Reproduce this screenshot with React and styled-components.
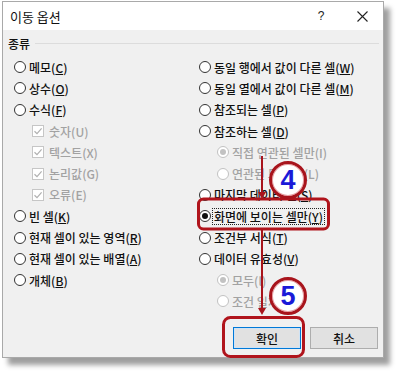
import React from 'react';
import styled, { createGlobalStyle } from 'styled-components';

const GlobalStyle = createGlobalStyle`
  body {
    margin: 0;
    background: #fff;
    font-family: "Noto Sans CJK KR", "Noto Sans", sans-serif;
  }
`;

const leftItems = [
  { label: '메모', key: 'C' },
  { label: '상수', key: 'O' },
  { label: '수식', key: 'F' },
  { label: '숫자', key: 'U', check: true, sub: true, disabled: true },
  { label: '텍스트', key: 'X', check: true, sub: true, disabled: true },
  { label: '논리값', key: 'G', check: true, sub: true, disabled: true },
  { label: '오류', key: 'E', check: true, sub: true, disabled: true },
  { label: '빈 셀', key: 'K' },
  { label: '현재 셀이 있는 영역', key: 'R' },
  { label: '현재 셀이 있는 배열', key: 'A' },
  { label: '개체', key: 'B' },
];

const rightItems = [
  { label: '동일 행에서 값이 다른 셀', key: 'W' },
  { label: '동일 열에서 값이 다른 셀', key: 'M' },
  { label: '참조되는 셀', key: 'P' },
  { label: '참조하는 셀', key: 'D' },
  { label: '직접 연관된 셀만', key: 'I', sub: true, disabled: true, selected: true },
  { label: '연관된 모든 셀', key: 'L', sub: true, disabled: true },
  { label: '마지막 데이터 셀', key: 'S' },
  { label: '화면에 보이는 셀만', key: 'Y', selected: true, focus: true },
  { label: '조건부 서식', key: 'T' },
  { label: '데이터 유효성', key: 'V' },
  { label: '모두', key: 'l', sub: true, disabled: true, selected: true },
  { label: '조건 일치', key: 'S', sub: true, disabled: true },
];

const Option = ({ item }) => (
  <Row $sub={item.sub} $disabled={item.disabled}>
    {item.check ? (
      <CheckBox $disabled={item.disabled}>
        <svg width="10" height="10" viewBox="0 0 10 10">
          <path d="M1.5 5.2 L4 7.6 L8.6 2.4" fill="none" stroke="currentColor" strokeWidth="1.2" />
        </svg>
      </CheckBox>
    ) : (
      <Radio $disabled={item.disabled} $selected={item.selected} />
    )}
    <Label $focus={item.focus}>
      {item.label}({item.disabled ? item.key : <u>{item.key}</u>})
    </Label>
  </Row>
);

export default function App() {
  return (
    <Page>
      <GlobalStyle />
      <Dialog>
        <TitleBar>
          <Title>이동 옵션</Title>
          <HelpBtn>?</HelpBtn>
          <CloseBtn>
            <svg width="11" height="11" viewBox="0 0 11 11">
              <path d="M0.5 0.5 L10.5 10.5 M10.5 0.5 L0.5 10.5" stroke="#222" strokeWidth="1.1" />
            </svg>
          </CloseBtn>
        </TitleBar>
        <Body>
          <GroupLabel>
            <span>종류</span>
            <Rule />
          </GroupLabel>
          <Columns>
            <Column>
              {leftItems.map((it, i) => <Option key={i} item={it} />)}
            </Column>
            <Column>
              {rightItems.map((it, i) => <Option key={i} item={it} />)}
            </Column>
          </Columns>
          <Buttons>
            <Button $primary>확인</Button>
            <Button>취소</Button>
          </Buttons>
        </Body>
      </Dialog>

      <Marks width="400" height="372" viewBox="0 0 400 372">
        <rect x="198.5" y="199" width="130" height="30" rx="5" fill="none" stroke="#b0141c" strokeWidth="3" />
        <rect x="223.5" y="317.5" width="80" height="39" rx="7" fill="none" stroke="#b0141c" strokeWidth="3" />
        <line x1="262" y1="156" x2="262" y2="193" stroke="#a8141c" strokeWidth="2" />
        <path d="M258 192 L266 192 L262 199 Z" fill="#a8141c" />
        <line x1="262" y1="230" x2="262" y2="309" stroke="#a8141c" strokeWidth="2" />
        <path d="M258 308 L266 308 L262 315 Z" fill="#a8141c" />
      </Marks>
      <Badge style={{ left: 269, top: 161 }}>4</Badge>
      <Badge style={{ left: 269, top: 277 }}>5</Badge>
    </Page>
  );
}

const Page = styled.div`
  position: relative;
  width: 400px;
  height: 372px;
  padding: 1px 0 0 2px;
  box-sizing: border-box;
  background: #fff;
  overflow: hidden;
`;

const Dialog = styled.div`
  width: 382px;
  height: 357px;
  box-sizing: border-box;
  display: flex;
  flex-direction: column;
  border: 1px solid #a9a9a9;
  background: #f0f0f0;
  box-shadow: 6px 7px 5px rgba(0, 0, 0, 0.38);
`;

const TitleBar = styled.div`
  height: 28px;
  display: flex;
  align-items: center;
  background: #fff;
  padding-left: 7px;
  font-size: 13px;
  font-weight: 400;
  color: #111;
`;

const Title = styled.div`
  flex: 1;
`;

const HelpBtn = styled.div`
  width: 40px;
  text-align: center;
  font-family: "Liberation Sans", Arial, sans-serif;
  font-size: 12px;
  color: #222;
`;

const CloseBtn = styled.div`
  width: 42px;
  height: 28px;
  display: flex;
  align-items: center;
  justify-content: center;
`;

const Body = styled.div`
  flex: 1;
  display: flex;
  flex-direction: column;
  padding: 6px 0 0 0;
  font-size: 12px;
  font-weight: 500;
  color: #111;
`;

const GroupLabel = styled.div`
  height: 14px;
  display: flex;
  align-items: center;
  gap: 5px;
  padding: 0 4px 0 5px;
`;

const Rule = styled.div`
  flex: 1;
  height: 1px;
  background: #dcdcdc;
`;

const Columns = styled.div`
  display: grid;
  grid-template-columns: 185px 1fr;
  padding: 6.5px 0 0 11px;
`;

const Column = styled.div`
  display: flex;
  flex-direction: column;
`;

const Row = styled.div`
  height: 21.3px;
  display: flex;
  align-items: center;
  gap: 2px;
  padding-left: ${p => (p.$sub ? '18px' : '0')};
  color: ${p => (p.$disabled ? '#a2a2a2' : '#111')};
  white-space: nowrap;
`;

const Radio = styled.span`
  position: relative;
  width: 12px;
  height: 12px;
  box-sizing: border-box;
  border-radius: 50%;
  border: 1px solid ${p => (p.$disabled ? '#c2c2c2' : '#333')};
  background: #fff;
  flex: none;
  &::after {
    content: '';
    display: ${p => (p.$selected ? 'block' : 'none')};
    position: absolute;
    left: 2px;
    top: 2px;
    width: 6px;
    height: 6px;
    border-radius: 50%;
    background: ${p => (p.$disabled ? '#c2c2c2' : '#111')};
  }
`;

const CheckBox = styled.span`
  width: 12px;
  height: 12px;
  box-sizing: border-box;
  border: 1px solid #c6c6c6;
  background: #fff;
  color: #b0b0b0;
  display: flex;
  align-items: center;
  justify-content: center;
  flex: none;
  margin-right: 2px;
`;

const Label = styled.span`
  padding: 0 1px;
  line-height: 15px;
  outline: ${p => (p.$focus ? '1px dotted #222' : 'none')};
  u {
    text-underline-offset: 1px;
  }
`;

const Buttons = styled.div`
  margin-top: auto;
  display: flex;
  justify-content: flex-end;
  gap: 9px;
  padding: 0 5px 8px 0;
`;

const Button = styled.div`
  width: 68px;
  height: 22px;
  box-sizing: border-box;
  display: flex;
  align-items: center;
  justify-content: center;
  background: #e1e1e1;
  border: 1px solid ${p => (p.$primary ? '#0078d7' : '#adadad')};
  box-shadow: ${p => (p.$primary ? 'inset 0 0 0 1px #cfe3f5' : 'none')};
  font-size: 12px;
  color: #111;
`;

const Marks = styled.svg`
  position: absolute;
  left: 0;
  top: 0;
  pointer-events: none;
`;

const Badge = styled.div`
  position: absolute;
  width: 38px;
  height: 38px;
  box-sizing: border-box;
  border-radius: 50%;
  border: 3px solid #a8141c;
  box-shadow: inset 0 0 0 1px #e7a0a4;
  background: #fff;
  display: flex;
  align-items: center;
  justify-content: center;
  font-family: "Liberation Sans", Arial, sans-serif;
  font-weight: bold;
  font-size: 27px;
  color: #1a1ad8;
`;
